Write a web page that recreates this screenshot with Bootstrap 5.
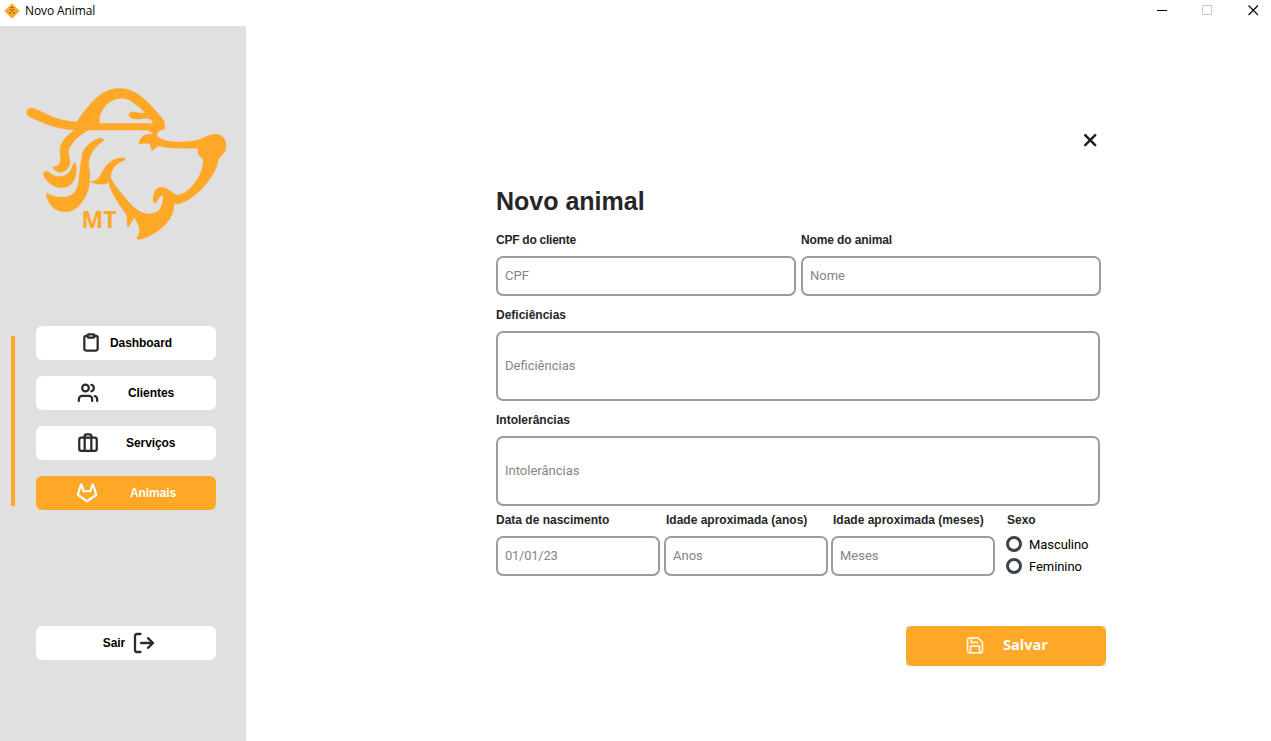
<!DOCTYPE html>
<html lang="pt-BR">
<head>
<meta charset="utf-8">
<title>Novo Animal</title>
<link href="https://cdn.jsdelivr.net/npm/bootstrap@5.3.0/dist/css/bootstrap.min.css" rel="stylesheet">
<style>
  :root { --brand: #ffa726; --side: #e0e0e0; --ink: #262626; }
  body { font-family: "Liberation Sans", Arial, sans-serif; font-size: 12px; color: #000; line-height: 16px; overflow: hidden; }
  svg { display: block; flex: none; }
  .titlebar { height: 26px; padding: 0 12px 5px 4px; }
  .titlebar span { font-family: "Open Sans", "Noto Sans", sans-serif; font-size: 12px; letter-spacing: -.1px; margin-left: 5px; }
  .win-max { margin: 0 35px; }
  .sidebar { width: 246px; background: var(--side); padding-top: 54px; }
  .logo { width: 210px; height: 165px; margin-left: 20px; }
  .menu { margin: 81px 30px 0 11px; }
  .marker { width: 4px; height: 170px; background: var(--brand); margin: 10px 21px 0 0; }
  .menu-btn { width: 180px; height: 34px; border: 0; border-radius: 6px; background: #fff; font-size: 12px; font-weight: 700; line-height: 16px; letter-spacing: -.07px; color: #000; padding: 0; }
  .menu-btn.current { background: var(--brand); color: #fff; }
  .exit { margin: 116px 0 0 36px; padding-left: 5px; }
  .stroke { fill: none; stroke: #2b2b2b; stroke-width: 2.7; stroke-linecap: round; stroke-linejoin: round; overflow: visible; }
  .i-dash { margin: 0 9px 0 45px; }
  .i-cli { margin: 0 30px 0 42px; }
  .i-serv { margin: 0 28px 0 42px; }
  .i-ani { margin: 0 33px 0 41px; stroke: #fff; }
  .i-exit { margin-left: 9px; stroke-width: 2.3; }
  .i-save { margin: 0 19px 0 60px; stroke: #fff2dc; stroke-width: 2.3; }
  .i-close { stroke: #202020; stroke-width: 2.5; stroke-linecap: round; }
  .form-area { padding: 106px 0 0 250px; }
  .form-box { width: 610px; }
  .close-row { padding-right: 8px; }
  .heading { font-size: 25px; font-weight: 700; line-height: 30px; color: var(--ink); margin: 38px 0 16px; }
  .form-label { font-weight: 700; color: var(--ink); margin: 0 0 8px; display: block; white-space: nowrap; }
  .form-label.tight { letter-spacing: -.25px; }
  .form-label.snug { letter-spacing: -.12px; }
  .form-label.shift { padding-left: 2px; }
  .form-control { border: 2px solid #979da2; border-radius: 7px; height: 40px; padding: 0 7px 2px; font-family: Roboto, sans-serif; font-size: 13px; color: #222; }
  .form-control::placeholder { color: #858585; opacity: 1; }
  .form-control.date { letter-spacing: -.25px; }
  .form-control.tall { height: 70px; width: 604px; }
  .field-row { margin-top: 11px; }
  .last-row { margin-top: 6px; }
  .w-half { width: 300px; }
  .w-small { width: 164px; }
  .gap-5px { gap: 5px; }
  .months { margin-left: 3px; }
  .sex { margin-left: 11px; }
  .form-check { min-height: 0; height: 16px; margin: 0 0 6px; padding: 0; gap: 7px; font-family: Roboto, sans-serif; font-size: 13px; letter-spacing: -.07px; }
  .form-check label { padding-top: 1px; }
  .form-check .form-check-input { float: none; width: 16px; height: 16px; border: 3px solid #3e454a; margin: 0; flex: none; }
  .save-wrap { width: 200px; height: 40px; background: var(--side); margin-top: 46px; }
  .save { width: 200px; height: 40px; border: 0; border-radius: 6px; background: var(--brand); color: #fff; font-family: "Open Sans", "Noto Sans", sans-serif; font-weight: 700; font-size: 14.5px; padding: 0 0 2px; }
</style>
</head>
<body class="bg-white vh-100 d-flex flex-column">
<header class="titlebar d-flex align-items-center">
  <svg width="16" height="16" viewBox="0 0 16 16"><path d="M8 .8 15.200 8 8 15.200.8 8z" fill="#ffa726" stroke="#ffa726" stroke-linejoin="round"/><path d="M6.500 4.500h3M6 6.500h1.500M8.500 6.500H10M7 8h2M5 10h2M9 10h2" fill="none" stroke="#805414" stroke-width=".9"/></svg>
  <span>Novo Animal</span>
  <div class="ms-auto d-flex align-items-center">
    <svg width="11" height="11" shape-rendering="crispEdges"><path d="M.5 5.500h10" stroke="#000"/></svg>
    <svg class="win-max" width="11" height="11" shape-rendering="crispEdges"><rect x=".5" y=".5" width="9" height="9" fill="none" stroke="#c8c8c8"/></svg>
    <svg width="11" height="11"><path d="M.5.5l9.500 9.500M10 .5.500 10" stroke="#000" stroke-width="1.100"/></svg>
  </div>
</header>
<div class="d-flex flex-grow-1">
  <aside class="sidebar">
    <svg class="logo" viewBox="20 80 210 165">
      <g fill="#ffa726" fill-rule="evenodd" stroke="#ffa726" stroke-width=".5">
        <path d="M26.800 113.500C26 110 29.500 107.500 33 108.300C39 110 46 114.500 53.300 117.300C61 120 69 121.500 76.700 122C83 113 91 102 100 95C107 90 113 88.500 120 88.500C127 88.700 132 90.500 136.700 93.300C143 97.500 148 102.500 153.300 108.300C157 112.500 160.500 116 163.300 120C165 123 165 126 164.700 129.300L160 130L157 133.500C156.500 135.500 157 136.500 158.300 137.300C163 140.500 170 142 176.700 142C185 142 192 141.500 198.300 140C204 138 209 134.500 215 134.300C221 134.300 225.700 138.500 225.700 143.300V149C225 153 220 156 218 160C217 167 214.500 172.500 210 178.300C206 185 201 190 195 195C190 199 184.500 202 178.300 204L174.300 203.300C174 209 173 213.500 170 218.300C166.500 224 162 228 156.700 231.700C150 235.500 144 239 138.500 239.500C137 239.500 136.500 238.500 137.300 237C140.500 233 141 227 134.300 217.700C132.500 219 131 224.500 128 226.700C126 225 128 220 126.700 215C122 208 114 198 110 187L109 182C105 185 98 185 90 181.700C96 181.500 99 178.500 101.500 173.500C104 168 109 161.500 115 159.300C119 158 124 157.500 125 158.300C125.500 159.500 125 160.200 124 160.500C117 162.500 111 168.500 110.500 177.500C113 183 117 188 120 191.700C125 197.500 129 203 133.300 206.700C139 212 145 214.300 150 214C155 213.500 159 211.500 160.500 208C162.500 204 163.500 199 163.300 195.500C159 195.500 158 200 156 202.700C152 203.500 153 198 154 194C155 189.500 158 187 161.700 187.300C165 187.500 167.500 189 170 190.700C173 192.500 174.500 195 178.300 195C184 194 188 191 191.700 186.700C196 181.500 200 176 201.700 170C203 166 203 163 203.300 159.500L198.300 154.500L198 148.300C191 148 184 148.300 176.700 148C169 148 163 147 158.300 145.700C156 146.500 154 150 151.700 150.700C150.500 148 151.500 146 149.500 143.700C145.500 142 142.500 144.500 139 143.300C138.500 141 141 138.500 143 136C146 134 149.500 134.500 152.700 134C152 132 149.500 130.500 146.700 130H88.300C81 134 73 140 69 149C67 154 70.500 158 70 163C68.500 169 64 172.500 60 172.500C56.500 172 53.500 169.500 52.700 167.300C56 167 59 165.500 60 162C61.500 159 60 155 60 151.700C60 142 67 135 75 130C60 129.500 45 124 33.300 118.500C30 117 27.500 116.500 26.800 113.500Z
          M99.300 123.500H153.300C152.500 121 150.500 119.500 148.300 118.300C143 117.800 139 119.300 135 119C131 118.500 128.800 117 129 114.800C129 112 132 111.800 134 112C138 112.700 141 113.800 145 112.700C142 109 139 106.500 135 104C131 100.500 127 98.500 122 98.300C115 98 108 102 104 107.500C101 112 99 116 99.300 123.500Z"/>
        <path d="M43.500 174C43.500 171.500 46 170.500 48.300 172C52 175 56 177 60 176.700C67 176 71.500 171 73 164.500Q75.500 160.500 76 166C77 173 75 181.500 70 185C65 188.500 58 188 53.300 185.700C49 183.500 44 178 43.500 174Z"/>
        <path d="M46 193C51 195.500 56 197.500 63.300 197.300C69 197 73 194.500 75 191.700C78 187.500 79 182 79.300 176.700C80 170 80.500 165 81.700 158.300C82.500 153 83 151 85 148.300C88 144 93 140.500 99 138.500C102 137.800 104.500 138.700 103.300 140.500C98 145 93 149 91 154.500C89 159 88.500 161.500 88.500 166C90 172 90 177 89.500 182C89 190 86 197 81 203.300C77 208.500 71 212 65 211.800C55 211.500 48 205 46 193Z"/>
      </g>
      <text x="81.500" y="228" fill="#ffa726" font-family="Open Sans, sans-serif" font-size="23.500" font-weight="700" textLength="35" lengthAdjust="spacingAndGlyphs">MT</text>
    </svg>
    <nav class="menu d-flex">
      <div class="marker"></div>
      <div class="d-flex flex-column gap-3">
        <button class="menu-btn d-flex align-items-center"><svg width="20" height="20" viewBox="0 0 24 24" class="stroke i-dash"><path d="M16 3.500h2a2 2 0 0 1 2 2V19a2 2 0 0 1-2 2H6a2 2 0 0 1-2-2V5.500a2 2 0 0 1 2-2h2"/><rect x="8" y="1.500" width="8" height="4" rx="1"/></svg>Dashboard</button>
        <button class="menu-btn d-flex align-items-center"><svg width="20" height="20" viewBox="0 0 24 24" class="stroke i-cli"><path d="M17 21.500v-2a4 4 0 0 0-4-4H5a4 4 0 0 0-4 4v2M23 21.500v-2a4 4 0 0 0-3-3.870M16 2.130a4 4 0 0 1 0 7.750"/><circle cx="9" cy="6" r="4"/></svg>Clientes</button>
        <button class="menu-btn d-flex align-items-center"><svg width="20" height="20" viewBox="0 0 24 24" class="stroke i-serv"><rect x="1.500" y="5.500" width="21" height="16" rx="2.500"/><path d="M8 21.500v-18a2 2 0 0 1 2-2h4a2 2 0 0 1 2 2v18"/></svg>Serviços</button>
        <button class="menu-btn current d-flex align-items-center"><svg width="20" height="20" viewBox="0 0 24 24" class="stroke i-ani"><path d="M22.650 14.390 12 22.130 1.350 14.390a.84.84 0 0 1-.3-.94l1.220-3.780 2.440-7.510A.42.42 0 0 1 4.820 2a.43.43 0 0 1 .58 0 .42.42 0 0 1 .11.18l2.440 7.490h8.100l2.440-7.510A.42.42 0 0 1 18.600 2a.43.43 0 0 1 .58 0 .42.42 0 0 1 .11.18l2.440 7.510L23 13.450a.84.84 0 0 1-.35.94z"/></svg>Animais</button>
      </div>
    </nav>
    <button class="menu-btn exit d-flex align-items-center justify-content-center">Sair<svg width="20" height="20" viewBox="0 0 20 20" class="stroke i-exit"><path d="M6.500 1H3Q1 1 1 3v14q0 2 2 2h3.500M7 10h12M14 5.200l5 4.800-5 4.800"/></svg></button>
  </aside>
  <main class="form-area">
    <form class="form-box">
      <div class="close-row d-flex justify-content-end"><svg class="i-close" width="16" height="16" viewBox="0 0 16 16"><path d="M3.200 3.200l10 10M13.200 3.200l-10 10"/></svg></div>
      <h1 class="heading">Novo animal</h1>
      <div class="d-flex gap-5px">
        <div class="w-half"><label class="form-label tight">CPF do cliente</label><input class="form-control" placeholder="CPF"></div>
        <div class="w-half"><label class="form-label snug">Nome do animal</label><input class="form-control" placeholder="Nome"></div>
      </div>
      <div class="field-row"><label class="form-label">Deficiências</label><input class="form-control tall" placeholder="Deficiências"></div>
      <div class="field-row"><label class="form-label">Intolerâncias</label><input class="form-control tall" placeholder="Intolerâncias"></div>
      <div class="last-row d-flex">
        <div class="w-small me-1"><label class="form-label">Data de nascimento</label><input class="form-control date" placeholder="01/01/23"></div>
        <div class="w-small"><label class="form-label shift">Idade aproximada (anos)</label><input class="form-control" placeholder="Anos"></div>
        <div class="w-small months"><label class="form-label shift">Idade aproximada (meses)</label><input class="form-control" placeholder="Meses"></div>
        <div class="sex"><label class="form-label ps-0">&#8202;Sexo</label>
          <div class="form-check d-flex align-items-center"><input class="form-check-input" type="radio" name="sexo" id="m"><label for="m">Masculino</label></div>
          <div class="form-check d-flex align-items-center"><input class="form-check-input" type="radio" name="sexo" id="f"><label for="f">Feminino</label></div>
        </div>
      </div>
      <div class="save-wrap ms-auto"><button type="button" class="save d-flex align-items-center"><svg width="18" height="18" viewBox="0 0 24 24" class="stroke i-save"><path d="M19 22.500H5a3 3 0 0 1-3-3v-14a3 3 0 0 1 3-3h11l6 6v11a3 3 0 0 1-3 3z"/><path d="M18 22v-8.500H6V22M7 3v5.500h8"/></svg>Salvar</button></div>
    </form>
  </main>
</div>
<script src="https://cdn.jsdelivr.net/npm/bootstrap@5.3.0/dist/js/bootstrap.bundle.min.js"></script>
</body>
</html>
